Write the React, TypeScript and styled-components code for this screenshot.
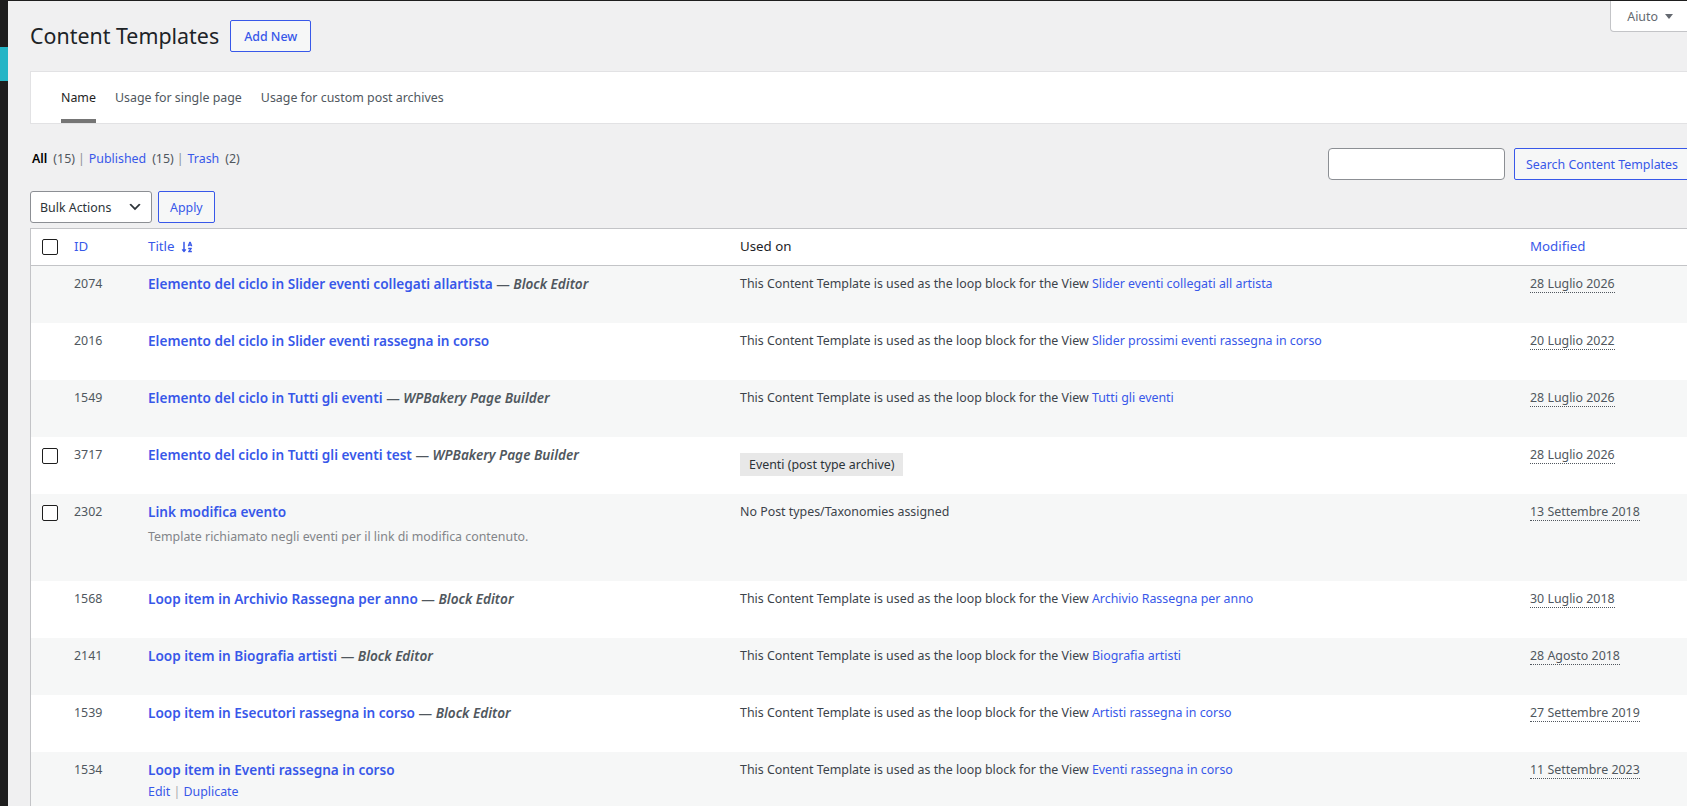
import { FC } from "react";
import styled, { createGlobalStyle } from "styled-components";
import { FaSortAlphaDown } from "react-icons/fa";

type UsedOn =
  | { kind: "view"; view: string }
  | { kind: "archive"; label: string }
  | { kind: "none" };

type Template = {
  id: number;
  title: string;
  editor?: string;
  description?: string;
  usedOn: UsedOn;
  modified: string;
  selectable?: boolean;
  hovered?: boolean;
};

const templates: Template[] = [
  {
    id: 2074,
    title: "Elemento del ciclo in Slider eventi collegati allartista",
    editor: "Block Editor",
    usedOn: { kind: "view", view: "Slider eventi collegati all artista" },
    modified: "28 Luglio 2026",
  },
  {
    id: 2016,
    title: "Elemento del ciclo in Slider eventi rassegna in corso",
    usedOn: { kind: "view", view: "Slider prossimi eventi rassegna in corso" },
    modified: "20 Luglio 2022",
  },
  {
    id: 1549,
    title: "Elemento del ciclo in Tutti gli eventi",
    editor: "WPBakery Page Builder",
    usedOn: { kind: "view", view: "Tutti gli eventi" },
    modified: "28 Luglio 2026",
  },
  {
    id: 3717,
    title: "Elemento del ciclo in Tutti gli eventi test",
    editor: "WPBakery Page Builder",
    usedOn: { kind: "archive", label: "Eventi (post type archive)" },
    modified: "28 Luglio 2026",
    selectable: true,
  },
  {
    id: 2302,
    title: "Link modifica evento",
    description: "Template richiamato negli eventi per il link di modifica contenuto.",
    usedOn: { kind: "none" },
    modified: "13 Settembre 2018",
    selectable: true,
  },
  {
    id: 1568,
    title: "Loop item in Archivio Rassegna per anno",
    editor: "Block Editor",
    usedOn: { kind: "view", view: "Archivio Rassegna per anno" },
    modified: "30 Luglio 2018",
  },
  {
    id: 2141,
    title: "Loop item in Biografia artisti",
    editor: "Block Editor",
    usedOn: { kind: "view", view: "Biografia artisti" },
    modified: "28 Agosto 2018",
  },
  {
    id: 1539,
    title: "Loop item in Esecutori rassegna in corso",
    editor: "Block Editor",
    usedOn: { kind: "view", view: "Artisti rassegna in corso" },
    modified: "27 Settembre 2019",
  },
  {
    id: 1534,
    title: "Loop item in Eventi rassegna in corso",
    usedOn: { kind: "view", view: "Eventi rassegna in corso" },
    modified: "11 Settembre 2023",
    hovered: true,
  },
];

const GlobalStyle = createGlobalStyle`
  html, body {
    margin: 0;
    height: 806px;
    overflow: hidden;
    background: #f0f0f1;
  }
  body {
    font-family: "Noto Sans", "Open Sans", sans-serif;
    font-size: 12.4px;
    color: #3c434a;
  }
  * {
    box-sizing: border-box;
  }
`;

const Shell = styled.div`
  display: flex;
  min-height: 806px;
  border-top: 1px solid #1e1e1e;
`;

const AdminMenu = styled.div`
  flex: none;
  width: 8px;
  background: #1e1e1e;
  padding-top: 46px;
`;

const MenuCurrent = styled.div`
  height: 34px;
  background: #24b5c6;
`;

const Wrap = styled.main`
  flex: none;
  width: 1682px;
  padding-left: 22px;
`;

const TopBar = styled.div`
  display: flex;
  justify-content: space-between;
  align-items: flex-start;
`;

const Heading = styled.div`
  display: flex;
  align-items: center;
  gap: 11px;
  padding-top: 19px;
`;

const PageTitle = styled.h1`
  margin: 0;
  font-size: 21.4px;
  font-weight: 400;
  line-height: 32px;
  color: #1d2327;
`;

const Button = styled.button`
  height: 32px;
  padding: 0 11px;
  border: 1px solid #3858e9;
  border-radius: 2px;
  background: #f6f7f7;
  color: #3858e9;
  font-family: inherit;
  font-size: 12.4px;
  font-weight: 400;
  white-space: nowrap;
  cursor: pointer;
`;

const AddNew = styled(Button)`
  padding: 0 13px;
  font-weight: 500;
`;

const HelpTab = styled.button`
  display: flex;
  align-items: center;
  gap: 7px;
  height: 31px;
  padding: 0 16px;
  background: #fff;
  border: 1px solid #c3c4c7;
  border-top: none;
  border-radius: 0 0 4px 4px;
  color: #646970;
  font-family: inherit;
  font-size: 12.4px;
`;

const TabsPanel = styled.nav`
  display: flex;
  gap: 19px;
  height: 53px;
  margin-top: 19px;
  padding-left: 30px;
  background: #fff;
  border: 1px solid #e2e2e4;
  border-right: none;
`;

const Tab = styled.a<{ $active?: boolean }>`
  display: flex;
  align-items: center;
  padding-top: 3px;
  border-bottom: 4px solid ${(p) => (p.$active ? "#757575" : "transparent")};
  color: ${(p) => (p.$active ? "#1e1e1e" : "#50575e")};
  text-decoration: none;
`;

const FilterBar = styled.div`
  display: flex;
  justify-content: space-between;
  align-items: flex-start;
  margin-top: 24px;
`;

const SubSub = styled.ul`
  display: flex;
  gap: 6px;
  margin: 0;
  padding: 0 0 0 2px;
  list-style: none;
  line-height: 22px;
  color: #50575e;
`;

const FilterLink = styled.a<{ $current?: boolean }>`
  color: ${(p) => (p.$current ? "#000" : "#3858e9")};
  font-weight: ${(p) => (p.$current ? 600 : 400)};
  text-decoration: none;
`;

const Sep = styled.li`
  margin: 0 -2px 0 -3px;
  color: #8c8f94;
`;

const SearchBox = styled.div`
  display: flex;
  gap: 9px;
`;

const SearchInput = styled.input`
  width: 177px;
  height: 32px;
  border: 1px solid #8c8f94;
  border-radius: 4px;
  background: #fff;
`;

const TableNav = styled.div`
  display: flex;
  gap: 6px;
  height: 32px;
  margin: 11px 0 5px;
`;

const Select = styled.div`
  display: flex;
  align-items: center;
  justify-content: space-between;
  width: 122px;
  padding: 0 8px 0 9px;
  background: #fff;
  border: 1px solid #8c8f94;
  border-radius: 3px;
  color: #2c3338;
`;

const Table = styled.table`
  width: 1660px;
  table-layout: fixed;
  border-spacing: 0;
  border: 1px solid #c3c4c7;
  background: #fff;
`;

const Th = styled.th<{ $width?: number }>`
  width: ${(p) => (p.$width ? `${p.$width}px` : "auto")};
  padding: 8px 10px;
  border-bottom: 1px solid #c3c4c7;
  text-align: left;
  font-size: 13.3px;
  font-weight: 400;
  line-height: 19.6px;
  color: #1d2327;
  vertical-align: middle;
`;

const CheckTh = styled(Th)`
  padding: 0 0 0 11px;
`;

const SortLink = styled.a`
  display: inline-flex;
  align-items: center;
  gap: 6px;
  color: #3858e9;
  text-decoration: none;
`;

const Row = styled.tr<{ $striped: boolean }>`
  background: ${(p) => (p.$striped ? "#f6f7f7" : "#fff")};
`;

const Td = styled.td`
  padding: 8px 10px;
  vertical-align: top;
  line-height: 19.5px;
  overflow: hidden;
`;

const CheckTd = styled(Td)`
  padding: 11px 0 0 11px;
`;

const IdTd = styled(Td)`
  color: #50575e;
`;

const Checkbox = styled.span`
  display: block;
  width: 16px;
  height: 16px;
  border: 1px solid #1e1e1e;
  border-radius: 2px;
  background: #fff;
`;

const TitleLine = styled.strong`
  display: block;
  font-size: 13.6px;
  font-weight: 600;
  white-space: nowrap;
  color: #50575e;
`;

const RowTitle = styled.a`
  color: #3858e9;
  text-decoration: none;
`;

const PostState = styled.span`
  font-style: italic;
`;

const Description = styled.p`
  margin: 6px 0 5px;
  color: #828589;
`;

const RowActions = styled.div<{ $visible?: boolean }>`
  padding-top: 2px;
  visibility: ${(p) => (p.$visible ? "visible" : "hidden")};
  color: #a7aaad;
`;

const ActionLink = styled.a`
  color: #3858e9;
  text-decoration: none;
`;

const ViewLink = styled.a`
  color: #3858e9;
  text-decoration: none;
`;

const Badge = styled.span`
  display: inline-block;
  margin-top: 8px;
  padding: 0 9px;
  line-height: 23px;
  background: #e8e8e8;
  color: #2c3338;
`;

const DateAbbr = styled.abbr`
  text-decoration: none;
  border-bottom: 1px dotted #50575e;
  color: #50575e;
`;

const ChevronDown: FC = () => (
  <svg width="16" height="16" viewBox="0 0 20 20">
    <path d="M5 6l5 5 5-5 2 1-7 7-7-7 2-1z" fill="#2c3338" />
  </svg>
);

const Caret: FC = () => (
  <svg width="8" height="5" viewBox="0 0 8 5">
    <polygon points="0,0 8,0 4,5" fill="#646970" />
  </svg>
);

const UsedOnCell: FC<{ usedOn: UsedOn }> = ({ usedOn }) => {
  if (usedOn.kind === "archive") return <Badge>{usedOn.label}</Badge>;
  if (usedOn.kind === "none") return <>No Post types/Taxonomies assigned</>;
  return (
    <>
      This Content Template is used as the loop block for the View{" "}
      <ViewLink href="#">{usedOn.view}</ViewLink>
    </>
  );
};

const App: FC = () => {
  return (
    <>
      <GlobalStyle />
      <Shell>
        <AdminMenu>
          <MenuCurrent />
        </AdminMenu>
        <Wrap>
          <TopBar>
            <Heading>
              <PageTitle>Content Templates</PageTitle>
              <AddNew>Add New</AddNew>
            </Heading>
            <HelpTab>
              Aiuto
              <Caret />
            </HelpTab>
          </TopBar>

          <TabsPanel>
            <Tab href="#" $active>
              Name
            </Tab>
            <Tab href="#">Usage for single page</Tab>
            <Tab href="#">Usage for custom post archives</Tab>
          </TabsPanel>

          <FilterBar>
            <SubSub>
              <li>
                <FilterLink href="#" $current>
                  All
                </FilterLink>
              </li>
              <li>(15)</li>
              <Sep>|</Sep>
              <li>
                <FilterLink href="#">Published</FilterLink>
              </li>
              <li>(15)</li>
              <Sep>|</Sep>
              <li>
                <FilterLink href="#">Trash</FilterLink>
              </li>
              <li>(2)</li>
            </SubSub>
            <SearchBox>
              <SearchInput type="search" />
              <Button>Search Content Templates</Button>
            </SearchBox>
          </FilterBar>

          <TableNav>
            <Select>
              Bulk Actions
              <ChevronDown />
            </Select>
            <Button>Apply</Button>
          </TableNav>

          <Table>
            <thead>
              <tr>
                <CheckTh $width={33}>
                  <Checkbox />
                </CheckTh>
                <Th $width={74}>
                  <SortLink href="#">ID</SortLink>
                </Th>
                <Th $width={592}>
                  <SortLink href="#">
                    Title
                    <FaSortAlphaDown size={12} />
                  </SortLink>
                </Th>
                <Th $width={790}>Used on</Th>
                <Th>
                  <SortLink href="#">Modified</SortLink>
                </Th>
              </tr>
            </thead>
            <tbody>
              {templates.map((t, i) => (
                <Row key={t.id} $striped={i % 2 === 0}>
                  <CheckTd>{t.selectable && <Checkbox />}</CheckTd>
                  <IdTd>{t.id}</IdTd>
                  <Td>
                    <TitleLine>
                      <RowTitle href="#">{t.title}</RowTitle>
                      {t.editor && (
                        <>
                          {" — "}
                          <PostState>{t.editor}</PostState>
                        </>
                      )}
                    </TitleLine>
                    {t.description && <Description>{t.description}</Description>}
                    <RowActions $visible={t.hovered}>
                      <ActionLink href="#">Edit</ActionLink> |{" "}
                      <ActionLink href="#">Duplicate</ActionLink>
                    </RowActions>
                  </Td>
                  <Td>
                    <UsedOnCell usedOn={t.usedOn} />
                  </Td>
                  <Td>
                    <DateAbbr title={t.modified}>{t.modified}</DateAbbr>
                  </Td>
                </Row>
              ))}
            </tbody>
          </Table>
        </Wrap>
      </Shell>
    </>
  );
};

export default App;
